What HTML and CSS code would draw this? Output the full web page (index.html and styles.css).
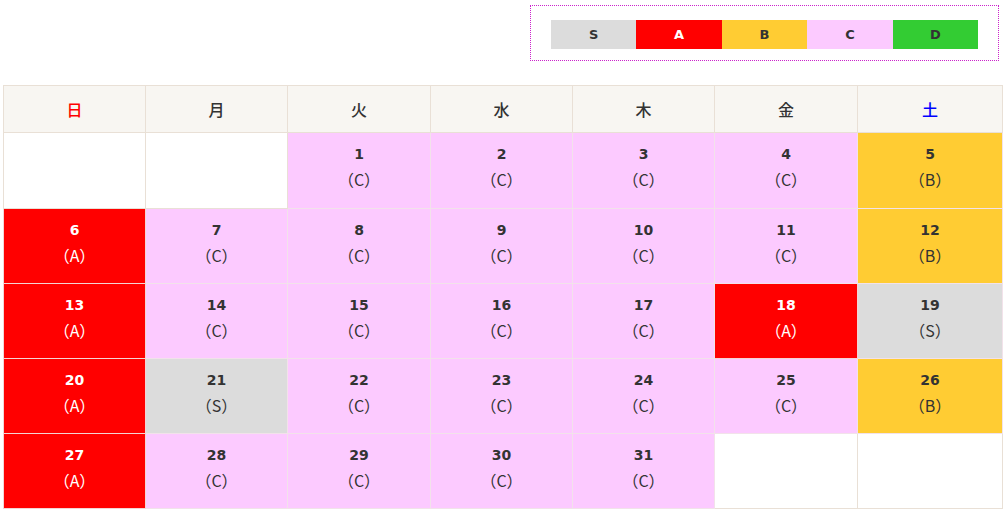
FILE: index.html
```html
<!DOCTYPE html>
<html lang="ja">
<head>
    <meta charset="UTF-8">
    <meta name="viewport" content="width=device-width, initial-scale=1.0">
    <title>カレンダー</title>
    <link rel="stylesheet" href="styles.css">
</head>
<body>
    <div class="page">
        <div class="legend-row">
            <div class="legend">
                <span class="rank s">S</span>
                <span class="rank a">A</span>
                <span class="rank b">B</span>
                <span class="rank c">C</span>
                <span class="rank d">D</span>
            </div>
        </div>

        <table class="calendar">
            <colgroup>
                <col class="col-n">
                <col class="col-n">
                <col class="col-w">
                <col class="col-n">
                <col class="col-n">
                <col class="col-w">
                <col class="col-last">
            </colgroup>
            <thead>
                <tr>
                    <th class="sun">日</th>
                    <th>月</th>
                    <th>火</th>
                    <th>水</th>
                    <th>木</th>
                    <th>金</th>
                    <th class="sat">土</th>
                </tr>
            </thead>
            <tbody>
                <tr class="first">
                    <td></td>
                    <td></td>
                    <td class="c"><b>1</b><span>（C）</span></td>
                    <td class="c"><b>2</b><span>（C）</span></td>
                    <td class="c"><b>3</b><span>（C）</span></td>
                    <td class="c"><b>4</b><span>（C）</span></td>
                    <td class="b"><b>5</b><span>（B）</span></td>
                </tr>
                <tr>
                    <td class="a"><b>6</b><span>（A）</span></td>
                    <td class="c"><b>7</b><span>（C）</span></td>
                    <td class="c"><b>8</b><span>（C）</span></td>
                    <td class="c"><b>9</b><span>（C）</span></td>
                    <td class="c"><b>10</b><span>（C）</span></td>
                    <td class="c"><b>11</b><span>（C）</span></td>
                    <td class="b"><b>12</b><span>（B）</span></td>
                </tr>
                <tr>
                    <td class="a"><b>13</b><span>（A）</span></td>
                    <td class="c"><b>14</b><span>（C）</span></td>
                    <td class="c"><b>15</b><span>（C）</span></td>
                    <td class="c"><b>16</b><span>（C）</span></td>
                    <td class="c"><b>17</b><span>（C）</span></td>
                    <td class="a"><b>18</b><span>（A）</span></td>
                    <td class="s"><b>19</b><span>（S）</span></td>
                </tr>
                <tr>
                    <td class="a"><b>20</b><span>（A）</span></td>
                    <td class="s"><b>21</b><span>（S）</span></td>
                    <td class="c"><b>22</b><span>（C）</span></td>
                    <td class="c"><b>23</b><span>（C）</span></td>
                    <td class="c"><b>24</b><span>（C）</span></td>
                    <td class="c"><b>25</b><span>（C）</span></td>
                    <td class="b"><b>26</b><span>（B）</span></td>
                </tr>
                <tr>
                    <td class="a"><b>27</b><span>（A）</span></td>
                    <td class="c"><b>28</b><span>（C）</span></td>
                    <td class="c"><b>29</b><span>（C）</span></td>
                    <td class="c"><b>30</b><span>（C）</span></td>
                    <td class="c"><b>31</b><span>（C）</span></td>
                    <td></td>
                    <td></td>
                </tr>
            </tbody>
        </table>
    </div>
</body>
</html>
```

FILE: styles.css
```css
body {
    margin: 0;
    font-family: "DejaVu Sans", "Noto Sans CJK JP", sans-serif;
    color: #333;
    background: #fff;
}
.page {
    padding: 5px 1px 0 3px;
}
.legend-row {
    display: flex;
    justify-content: flex-end;
    padding-right: 3px;
}
.legend {
    display: flex;
    border: 1px dotted #cc22cc;
    padding: 14px 20px 11px 20px;
}
.rank {
    width: 85.4px;
    height: 29px;
    line-height: 29px;
    text-align: center;
    font-size: 13px;
    font-weight: bold;
}
.s {
    background-color: #dcdcdc;
}
.a {
    background-color: #ff0000;
    color: #fff;
}
.b {
    background-color: #ffcc33;
}
.c {
    background-color: #fccaff;
}
.d {
    background-color: #33cc33;
}
.calendar {
    margin-top: 24px;
    width: 999px;
    border-collapse: collapse;
    table-layout: fixed;
}
.col-n {
    width: 142px;
}
.col-w {
    width: 143px;
}
.col-last {
    width: 145px;
}
.calendar th,
.calendar td {
    border: 1px solid #e9e0d6;
    text-align: center;
}
.calendar th {
    height: 45px;
    padding: 0 0 1px;
    background-color: #f8f6f2;
    font-family: "Noto Sans CJK JP", sans-serif;
    font-size: 16px;
    font-weight: 500;
}
.calendar th.sun {
    color: #ff0000;
}
.calendar th.sat {
    color: #0000ff;
}
.calendar td {
    height: 74px;
    vertical-align: top;
    padding: 0;
}
.calendar tr.first td {
    height: 75px;
}
.calendar td b {
    display: block;
    margin-top: 12px;
    font-size: 14px;
    line-height: 18px;
}
.calendar td span {
    display: block;
    margin-top: 6px;
    font-size: 16px;
    line-height: 20px;
    font-family: "Noto Sans CJK JP", sans-serif;
}
.calendar td.a {
    color: #fff;
    border-color: #f4d4d4;
}
.calendar td.c,
.calendar td.b,
.calendar td.s {
    border-color: #f2e2ea;
}
```
